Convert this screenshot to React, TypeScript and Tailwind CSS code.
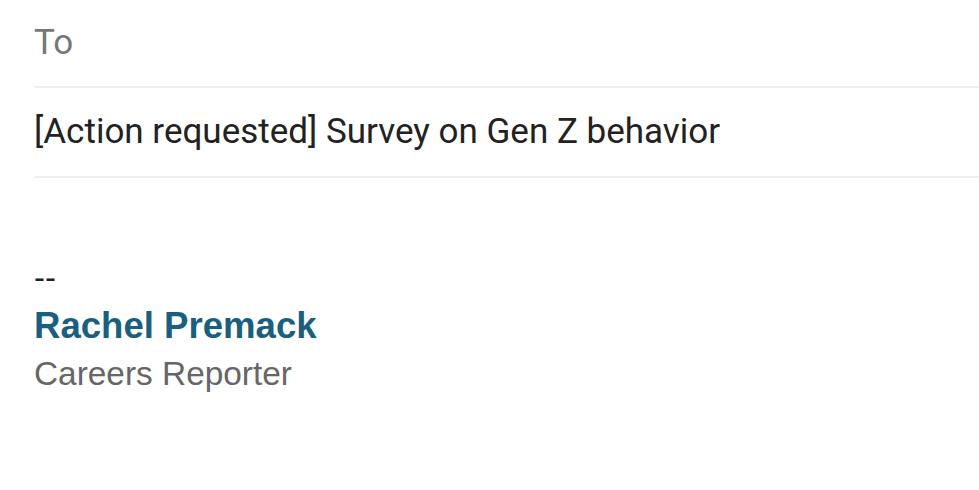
export default function App() {
  return (
    <div className="w-[979px] h-[490px] bg-white pl-[34px] overflow-hidden">
      <div className="h-[86px] flex items-center text-[35px] text-[#777777]" style={{ fontFamily: 'Roboto, sans-serif' }}>
        To
      </div>
      <div className="border-t-2 border-[#eceff1] h-[90px] flex items-center text-[35px] text-[#222222]" style={{ fontFamily: 'Roboto, sans-serif' }}>
        [Action requested] Survey on Gen Z behavior
      </div>
      <div className="border-t-2 border-[#eceff1]" />
      <div className="pt-[76px] leading-[48px]" style={{ fontFamily: '"Liberation Sans", Arial, sans-serif' }}>
        <div className="text-[33px] text-[#222222]">--</div>
        <div className="text-[36.6px] font-bold text-[#1a5f7e]">Rachel Premack</div>
        <div className="text-[33.4px] text-[#666666]">Careers Reporter</div>
      </div>
    </div>
  );
}
